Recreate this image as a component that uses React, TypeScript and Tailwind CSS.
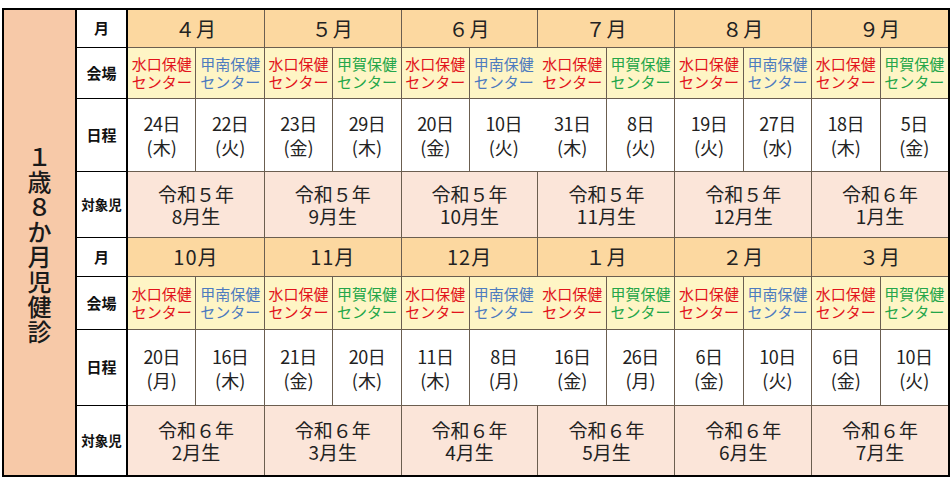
import React from 'react';

const FONT = '"Noto Sans CJK JP", "Noto Sans", sans-serif';

type V = 'm' | 'n' | 'k';
const venueName: Record<V, string> = { m: '水口保健', n: '甲南保健', k: '甲賀保健' };
const venueColor: Record<V, string> = {
  m: 'text-[#e2141c]',
  n: 'text-[#4d7bbf]',
  k: 'text-[#24a64a]',
};

type Half = {
  months: string[];
  venues: [V, V][];
  dates: [string, string][][];
  years: string[];
  births: string[];
  h: [number, number, number, number];
};

const halves: Half[] = [
  {
    months: ['４月', '５月', '６月', '７月', '８月', '９月'],
    venues: [['m', 'n'], ['m', 'k'], ['m', 'n'], ['m', 'k'], ['m', 'n'], ['m', 'k']],
    dates: [
      [['24日', '木'], ['22日', '火']],
      [['23日', '金'], ['29日', '木']],
      [['20日', '金'], ['10日', '火']],
      [['31日', '木'], ['8日', '火']],
      [['19日', '火'], ['27日', '水']],
      [['18日', '木'], ['5日', '金']],
    ],
    years: ['令和５年', '令和５年', '令和５年', '令和５年', '令和５年', '令和６年'],
    births: ['8月生', '9月生', '10月生', '11月生', '12月生', '1月生'],
    h: [38, 51, 73, 66],
  },
  {
    months: ['10月', '11月', '12月', '１月', '２月', '３月'],
    venues: [['m', 'n'], ['m', 'k'], ['m', 'n'], ['m', 'k'], ['m', 'n'], ['m', 'k']],
    dates: [
      [['20日', '月'], ['16日', '木']],
      [['21日', '金'], ['20日', '木']],
      [['11日', '木'], ['8日', '月']],
      [['16日', '金'], ['26日', '月']],
      [['6日', '金'], ['10日', '火']],
      [['6日', '金'], ['10日', '火']],
    ],
    years: ['令和６年', '令和６年', '令和６年', '令和６年', '令和６年', '令和６年'],
    births: ['2月生', '3月生', '4月生', '5月生', '6月生', '7月生'],
    h: [39, 53, 76, 69],
  },
];

function Label({ text, small, last }: { text: string; small?: boolean; last?: boolean }) {
  return (
    <div
      className={`w-[51px] shrink-0 flex items-center justify-center bg-white border-r-2 border-black font-bold text-[#111] ${
        last ? '' : 'border-b-[1.5px]'
      } ${small ? 'text-[13.5px]' : 'text-[15px]'}`}
    >
      {text}
    </div>
  );
}

function HalfBlock({ d, lastHalf }: { d: Half; lastHalf: boolean }) {
  const border = 'border-[#6b5e50]';
  return (
    <>
      {/* month row */}
      <div className="flex" style={{ height: d.h[0] }}>
        <Label text="月" />
        {d.months.map((m, i) => (
          <div
            key={i}
            className={`flex-1 flex items-center justify-center bg-[#fcd8a0] border-b ${border} ${
              i < 5 ? 'border-r' : ''
            } text-[20px] text-[#222] tracking-[1px]`}
          >
            {m}
          </div>
        ))}
      </div>
      {/* venue row */}
      <div className="flex" style={{ height: d.h[1] }}>
        <Label text="会場" />
        {d.venues.map((pair, i) => (
          <div key={i} className={`flex-1 flex border-b ${border} ${i < 5 ? 'border-r' : ''}`}>
            {pair.map((v, j) => (
              <div
                key={j}
                className={`flex-1 flex flex-col items-center justify-center bg-[#fef5c5] text-[15px] leading-[18px] ${
                  venueColor[v]
                } ${j === 0 ? `border-r ${border}` : ''}`}
              >
                <span>{venueName[v]}</span>
                <span>センター</span>
              </div>
            ))}
          </div>
        ))}
      </div>
      {/* date row */}
      <div className="flex" style={{ height: d.h[2] }}>
        <Label text="日程" />
        {d.dates.map((pair, i) => (
          <div key={i} className={`flex-1 flex border-b ${border} ${i < 5 ? 'border-r' : ''}`}>
            {pair.map((dt, j) => (
              <div
                key={j}
                className={`flex-1 flex flex-col items-center justify-center bg-white text-[18px] leading-[24px] text-[#222] ${
                  j === 0 ? `border-r ${border}` : ''
                }`}
              >
                <span className="tracking-[-0.5px]">{dt[0]}</span>
                <span>({dt[1]})</span>
              </div>
            ))}
          </div>
        ))}
      </div>
      {/* target row */}
      <div className="flex" style={{ height: d.h[3] }}>
        <Label text="対象児" small last={lastHalf} />
        {d.years.map((y, i) => (
          <div
            key={i}
            className={`flex-1 flex flex-col items-center justify-center bg-[#fbe5d9] text-[19px] leading-[22px] text-[#222] ${
              lastHalf ? '' : `border-b ${border}`
            } ${i < 5 ? `border-r ${border}` : ''}`}
          >
            <span>{y}</span>
            <span>{d.births[i]}</span>
          </div>
        ))}
      </div>
    </>
  );
}

export default function App() {
  const title = ['１', '歳', '８', 'か', '月', '児', '健', '診'];
  return (
    <div className="w-[952px] h-[482px] bg-white pt-[8px] pl-[2px]" style={{ fontFamily: FONT }}>
      <div className="flex w-[948px] h-[469px] border-2 border-black">
        <div className="w-[73px] shrink-0 bg-[#f7c9a8] border-r-2 border-black flex flex-col items-center justify-center">
          {title.map((c, i) => (
            <span key={i} className="text-[24px] leading-[25px] font-medium text-[#1a1a1a]">
              {c}
            </span>
          ))}
        </div>
        <div className="flex-1 flex flex-col">
          <HalfBlock d={halves[0]} lastHalf={false} />
          <HalfBlock d={halves[1]} lastHalf={true} />
        </div>
      </div>
    </div>
  );
}
